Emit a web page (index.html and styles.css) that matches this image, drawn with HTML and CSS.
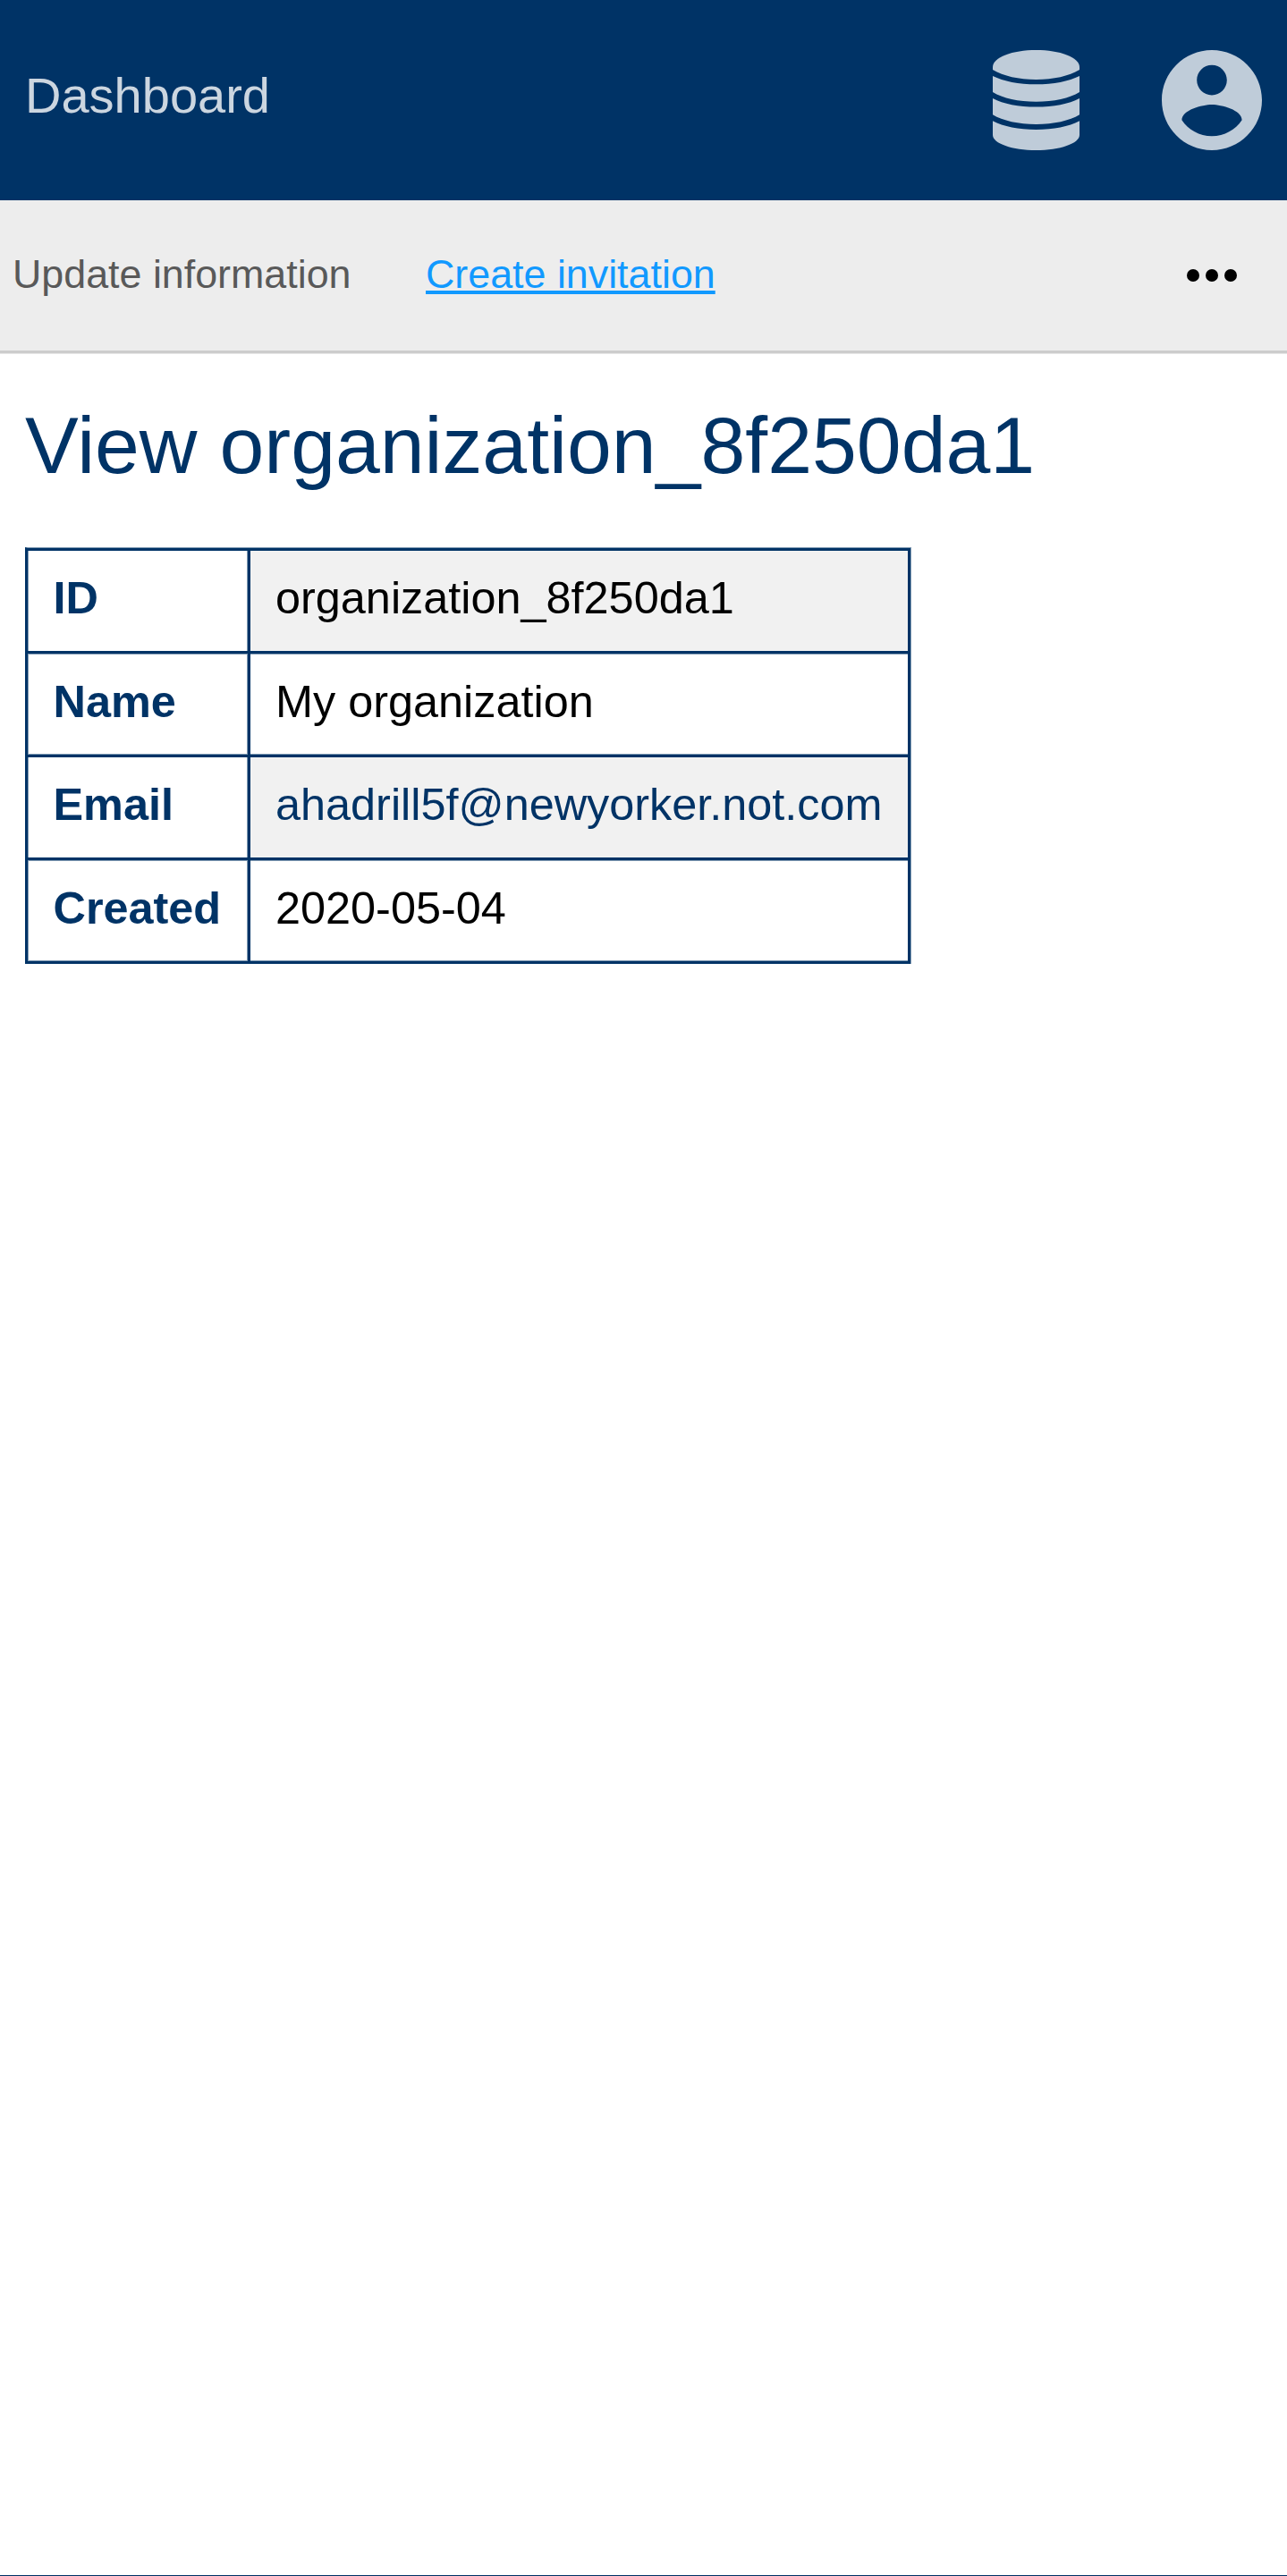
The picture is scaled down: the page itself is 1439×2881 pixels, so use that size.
FILE: index.html
```html
<!DOCTYPE html>
<html lang="en">
<head>
<meta charset="utf-8">
<title>View organization_8f250da1</title>
<link rel="stylesheet" href="styles.css">
</head>
<body>
<div class="page">
  <header class="header">
    <a class="header-title">Dashboard</a>
    <div class="header-icons">
      <svg class="icon-database" viewBox="0 0 97 112" aria-hidden="true">
        <path d="M0 19C0 8 22 0 48.500 0S97 8 97 19V22C85 29 68 33 48.500 33S12 29 0 22Z"/>
        <path d="M0 29C12 35 29 38.300 48.500 38.300S85 35 97 29V47C86 54 68 57.700 48.500 57.700S11 54 0 47Z"/>
        <path d="M0 54C12 60.300 29 63.600 48.500 63.600S85 60.300 97 54V72.200C86 79 68 82.900 48.500 82.900S11 79 0 72.200Z"/>
        <path d="M0 79.200C12 85.500 29 88.900 48.500 88.900S85 85.500 97 79.200V95C97 104.500 75 112 48.500 112S0 104.500 0 95Z"/>
      </svg>
      <svg class="icon-account" viewBox="2 2 20 20" aria-hidden="true">
        <path d="M12 2C6.480 2 2 6.480 2 12s4.480 10 10 10 10-4.480 10-10S17.520 2 12 2zm0 3c1.660 0 3 1.340 3 3s-1.340 3-3 3-3-1.340-3-3 1.340-3 3-3zm0 14.200c-2.500 0-4.710-1.280-6-3.220.03-1.990 4-3.080 6-3.080 1.990 0 5.970 1.090 6 3.080-1.290 1.940-3.500 3.220-6 3.220z"/>
      </svg>
    </div>
  </header>
  <nav class="actions">
    <a class="action">Update information</a>
    <a class="action action-active">Create invitation</a>
    <svg class="icon-more" viewBox="0 0 56 56" aria-hidden="true">
      <circle cx="7" cy="28" r="7"/><circle cx="28" cy="28" r="7"/><circle cx="49" cy="28" r="7"/>
    </svg>
  </nav>
  <main class="content">
    <h1 class="title">View organization_8f250da1</h1>
    <table class="details">
      <tr class="row-first"><th>ID</th><td>organization_8f250da1</td></tr>
      <tr class="row-even"><th>Name</th><td>My organization</td></tr>
      <tr class="row-odd"><th>Email</th><td><a class="email">ahadrill5f@newyorker.not.com</a></td></tr>
      <tr class="row-last"><th>Created</th><td>2020-05-04</td></tr>
    </table>
  </main>
  <footer class="footer"></footer>
</div>
</body>
</html>
```

FILE: styles.css
```css
:root {
  --navy: #003366;
  --navy-soft: #8099b2;
}

* {
  box-sizing: border-box;
}

body {
  margin: 0;
  background: #fff;
  font-family: "Liberation Sans", Arial, sans-serif;
  color: #000;
}

.page {
  display: flex;
  flex-direction: column;
  height: 2881px;
  overflow: hidden;
}

.header {
  display: flex;
  flex: none;
  align-items: center;
  justify-content: space-between;
  height: 224px;
  padding: 0 28px;
  background: var(--navy);
}

.header-title {
  padding-bottom: 10px;
  font-size: 56px;
  line-height: 64px;
  color: #ccd6e0;
}

.header-icons {
  display: flex;
  align-items: center;
  gap: 92px;
  fill: #bfccd9;
}

.icon-database {
  width: 97px;
  height: 112px;
}

.icon-account {
  width: 112px;
  height: 112px;
}

.actions {
  display: flex;
  flex: none;
  align-items: center;
  gap: 83.5px;
  height: 171px;
  margin-bottom: 1px;
  padding: 0 56px 0 14px;
  background: #ededed;
  border-bottom: 3px solid #ccc;
  box-shadow: 0 1px #e6e6e6;
}

.action {
  padding-bottom: 5px;
  font-size: 44.8px;
  line-height: 52px;
  color: #595959;
}

.action-active {
  color: #1199ff;
  text-decoration: underline;
}

.icon-more {
  width: 56px;
  height: 56px;
  margin-left: auto;
}

.content {
  flex: 1;
  padding: 50px 28px 0;
}

.title {
  margin: 0 0 62px;
  font-size: 89.6px;
  font-weight: 400;
  line-height: 104px;
  color: var(--navy);
}

.details {
  width: 991px;
  table-layout: fixed;
  border-collapse: separate;
  border-spacing: 0;
  border-top: 1px solid var(--navy-soft);
  border-right: 1px solid var(--navy-soft);
  border-left: 3px solid var(--navy);
  font-size: 50.4px;
  line-height: 58px;
}

.details th,
.details td {
  height: 115px;
  padding: 0 28px 6px;
  border-top: 3px solid var(--navy);
  text-align: left;
  vertical-align: middle;
  white-space: nowrap;
}

.details th {
  width: 246px;
  padding-left: 28.5px;
  color: var(--navy);
  box-shadow: inset 1px 0 var(--navy-soft), inset -1px 0 var(--navy-soft);
}

.details td {
  border-right: 3px solid var(--navy);
  border-left: 3px solid var(--navy);
}

.row-first td,
.row-odd td {
  background: #f1f1f1;
}

.details .row-even th,
.details .row-even td {
  height: 116px;
  box-shadow: inset 0 1px var(--navy-soft), inset 0 -1px var(--navy-soft);
}

.details .row-last th,
.details .row-last td {
  height: 119px;
  border-bottom: 3px solid var(--navy);
  box-shadow: inset 0 1px var(--navy-soft), inset 0 -1px var(--navy-soft);
}

.details .row-even th,
.details .row-last th {
  box-shadow: inset 1px 1px var(--navy-soft), inset -1px -1px var(--navy-soft);
}

.email {
  color: var(--navy);
}

.footer {
  flex: none;
  height: 1px;
  background: var(--navy);
}
```
